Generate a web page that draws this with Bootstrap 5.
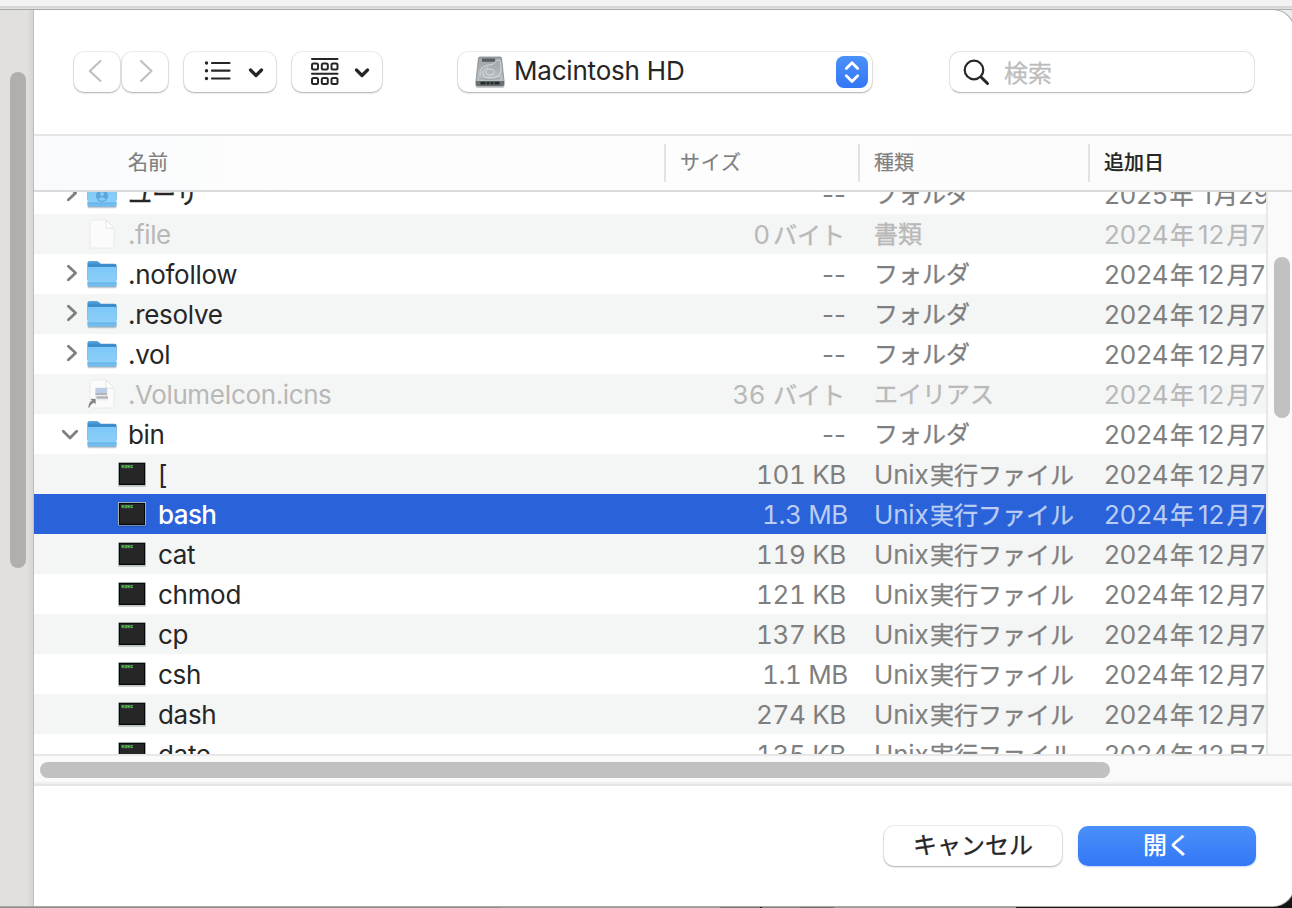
<!DOCTYPE html>
<html lang="ja">
<head>
<meta charset="utf-8">
<meta name="viewport" content="width=device-width, initial-scale=1">
<title>Macintosh HD</title>
<link href="https://cdn.jsdelivr.net/npm/bootstrap@5.3.0/dist/css/bootstrap.min.css" rel="stylesheet">
<style>
html,body{height:100%;overflow:hidden}
body{font-family:Inter,"Noto Sans CJK JP",sans-serif;font-size:26px;line-height:42px;color:#262626;background:linear-gradient(90deg,#8e8e8e 0 500px,#999b99 500px 720px,#777 720px 760px,#1c1c1c 760px 762px,#858585 762px 800px,#6e6e6e 800px 834px,#999b99 834px 1016px,#151515 1016px)}
.desk-strip{height:10px;background:linear-gradient(#f2f2f2 0 6px,#d6d8d6 6px 8px,#dfe1df 8px 9px,#adb0ad 9px)}
.corner-bg{height:896px;background:linear-gradient(#eceeed 0 60px,#151515 60px)}
.sheet{width:1294px;height:896px;background:#fff;border-radius:0 21px 21px 0;overflow:hidden;box-shadow:0 0 0 1px #a9aba9}
.side{width:34px;background:linear-gradient(90deg,#e1e0de 0 27px,#dcdad8 30px,#d6d3d2 33px,#bfbdbd 33px);padding:62px 0 0 10px}
.side-thumb{width:16px;height:496px;border-radius:8px;background:#b0afad}
.pane{width:1258px}
.tools{height:124px;padding:42px 0 0 40px}
.ctl{height:40px;border-radius:10px;background:#fff;border:0;box-shadow:0 0 0 1px rgba(0,0,0,.06),0 1px 2px rgba(0,0,0,.28);padding:0;color:#262626}
.ctl svg,.row-line svg{display:block;flex:none}
.nav-btn{width:46px}
.nav-btn+.nav-btn{margin-left:2px}
.list-btn{width:92px;margin-left:16px}
.group-btn{width:90px;margin-left:16px}
.volume{width:414px;margin-left:76px}
.mac{padding:0 0 2px 8px;line-height:38px;letter-spacing:-.2px}
.search{width:306px;height:42px;margin:-1px 0 0 77px;border-radius:11px;border:1px solid #e3e3e3;border-bottom-color:#bdbdbd;box-shadow:0 1px 0 rgba(0,0,0,.05)}
.search svg{margin-left:12px}
.search span{margin-left:14px;padding-top:3px;font-size:24px;color:#bdbdbd;-webkit-text-stroke:.3px}
.heads{height:58px;border-top:2px solid #e5e5e5;border-bottom:2px solid #d9dadb;background:linear-gradient(90deg,#f8fafc,#fdfdfd 20%,#fdfdfd 60%,#fafafa);font-size:20px;line-height:52px;color:#7f7f7f;-webkit-text-stroke:.2px}
.heads .sep{width:2px;height:38px;background:#e2e2e2}
.h-name{width:630px;padding-left:94px}
.h-size{width:192px;padding-left:14px;letter-spacing:.8px}
.h-kind{width:228px;padding-left:14px}
.h-date{padding-left:14px;color:#262626;font-weight:500}
.list-zone{height:562px}
.rows{width:1232px;height:562px;overflow:hidden}
.rows-in{margin-top:-18px}
.row-line{height:40px;white-space:nowrap;color:#262626}
.row-line:nth-child(even){background:#f4f5f5}
.c-name{width:630px;padding-left:53px}
.c-name.sub{padding-left:83px}
.nm{margin-left:11px;padding-top:2px;letter-spacing:-.3px}
.jp.nm{letter-spacing:0;padding-top:1px}
.c-size{width:182px;text-align:right;color:#7f7f7f}
.num{font-variant-numeric:tabular-nums;letter-spacing:-.35px}
.mb{margin-right:-2px}
.c-kind{width:230px;margin-left:28px;color:#7f7f7f}
.c-date{width:162px;height:40px;overflow:hidden;color:#7f7f7f}
.jp,.y,.m{font-size:24px;-webkit-text-stroke:.35px}
.y{margin:0 4px 0 1.5px}
.m{margin-left:2px}
.byte{margin:0 1px 0 3px}
.dim .num+.byte{margin-left:1px}
.u{font-size:26px;margin:0 1.5px 0 0;letter-spacing:-.2px;-webkit-text-stroke:0}
.tw{width:25px;margin-left:-28px;margin-right:3px}
.dim .nm,.dim .c-size,.dim .c-kind,.dim .c-date{color:#b8b8b8}
.dim .nm{letter-spacing:-.4px}
.rows .sel{background:#2962d9;color:#fff}
.sel .c-size,.sel .c-kind,.sel .c-date{color:#bccdf3}
.sel .nm{font-weight:500;letter-spacing:-.6px}
.vtrack{width:26px;border-left:2px solid #e8e8e8;background:#fafafa;padding:65px 0 0 6px}
.vthumb{width:16px;height:161px;border-radius:8px;background:#c1c1c1}
.htrack{height:32px;border-bottom:2px solid #e5e5e5;background:linear-gradient(#e8e8e8 0 2px,#fafafa 2px 28px,#efefef 28px);padding:8px 0 0 6px}
.hthumb{width:1070px;height:16px;border-radius:8px;background:#c1c1c1}
.foot{padding:40px 36px 0 0;gap:16px}
.foot .ctl{width:178px;font-size:24px;line-height:38px;-webkit-text-stroke:.35px}
.foot .go{background:linear-gradient(#4a90f9,#3477f6);color:#fff;box-shadow:0 1px 2px rgba(40,110,240,.3);font-weight:500;-webkit-text-stroke:0}
</style>
</head>
<body>
<svg width="0" height="0" class="position-absolute" aria-hidden="true">
<defs>
<linearGradient id="fb" x1="0" y1="0" x2="0" y2="1"><stop offset="0" stop-color="#5ba9dc"/><stop offset=".3" stop-color="#2f80c4"/></linearGradient>
<linearGradient id="ff" x1="0" y1="0" x2="0" y2="1"><stop offset="0" stop-color="#7cc8f8"/><stop offset=".7" stop-color="#8bcef9"/><stop offset="1" stop-color="#68b5ea"/></linearGradient>
<linearGradient id="hd" x1="0" y1="0" x2="0" y2="1"><stop offset="0" stop-color="#9ba1a5"/><stop offset="1" stop-color="#c3c9cc"/></linearGradient>
<linearGradient id="bl" x1="0" y1="0" x2="0" y2="1"><stop offset="0" stop-color="#4a90f9"/><stop offset="1" stop-color="#3477f6"/></linearGradient>
</defs>
<symbol id="folder" viewBox="0.6 -0.8 29 30" preserveAspectRatio="none">
<rect x="1" y="24" width="28.4" height="4.400" rx="2" fill="#000" opacity=".2"/>
<path d="M1 3.200Q1 1.200 3 1.200H9.500Q11 1.200 12 2.200L13.300 3.400Q14 4 15.200 4H27.400Q29.200 4 29.200 6V20H1Z" fill="url(#fb)"/>
<path d="M1 8.500Q1 7 2.500 7H27.700Q29.200 7 29.200 8.500V25Q29.200 27 27.200 27H3Q1 27 1 25Z" fill="url(#ff)"/>
<path d="M1 23.500H29.200" stroke="#5da9de" stroke-width=".8"/>
</symbol>
<symbol id="page" viewBox="0 0 30 30">
<path d="M3 2.500Q3 1 4.500 1H19L27 9V27.500Q27 29 25.500 29H4.500Q3 29 3 27.500Z" fill="#fbfbfb" stroke="#e6e7e7" stroke-width=".8"/>
<path d="M19 1V8Q19 9 20 9H27Z" fill="#fff" stroke="#dcdddd" stroke-width=".8"/>
</symbol>
<symbol id="term" viewBox="0 -1 30 26">
<rect x="1" y="2" width="28" height="22.800" rx="1" fill="#000" opacity=".25"/>
<rect x="1" y="0" width="28" height="23.500" rx=".8" fill="#c7d9e0"/>
<rect x="1.800" y=".8" width="26.400" height="22.200" fill="#060606"/>
<rect x="3" y="1.800" width="24" height="20" fill="#262626"/>
<text x="4.600" y="6.400" font-family="Liberation Mono" font-weight="bold" font-size="4.800" fill="#5fc05f" stroke="#5fc05f" stroke-width=".25">exec</text>
</symbol>
<symbol id="right" viewBox="0 0 25 40"><path d="M9.400 12.300 16.600 19 9.400 25.700" fill="none" stroke="#7f7f7f" stroke-width="2.800" stroke-linecap="round" stroke-linejoin="round"/></symbol>
<symbol id="down" viewBox="0 0 25 40"><path d="M4.300 17.300 11 24 17.700 17.300" fill="none" stroke="#7f7f7f" stroke-width="2.800" stroke-linecap="round" stroke-linejoin="round"/></symbol>
<symbol id="caret" viewBox="0 0 16 10"><path d="M2.500 2 8 7.500 13.500 2" fill="none" stroke="#262626" stroke-width="3.200" stroke-linecap="round" stroke-linejoin="round"/></symbol>
</svg>

<div class="desk-strip"></div>
<div class="corner-bg">
<div class="sheet d-flex">
  <aside class="side flex-shrink-0"><div class="side-thumb"></div></aside>
  <main class="pane d-flex flex-column flex-shrink-0">
    <div class="tools d-flex align-items-start flex-shrink-0">
      <button class="ctl nav-btn d-flex" aria-label="戻る"><svg width="46" height="40" fill="none" stroke="#bfbfbf" stroke-width="2.200" stroke-linecap="round" stroke-linejoin="round"><path d="M26.500 9 15.800 19 26.500 29"/></svg></button>
      <button class="ctl nav-btn d-flex" aria-label="進む"><svg width="46" height="40" fill="none" stroke="#bfbfbf" stroke-width="2.200" stroke-linecap="round" stroke-linejoin="round"><path d="M19 9 29.500 19 19 29"/></svg></button>
      <button class="ctl list-btn d-flex" aria-label="リスト"><svg width="92" height="40"><g fill="#262626"><circle cx="22.500" cy="11" r="1.700"/><circle cx="22.500" cy="18.700" r="1.700"/><circle cx="22.500" cy="26.500" r="1.700"/></g><path d="M28 11H45.500M28 18.700H45.500M28 26.500H45.500" stroke="#262626" stroke-width="2.200" stroke-linecap="round"/><use href="#caret" x="64" y="16" width="16" height="10"/></svg></button>
      <button class="ctl group-btn d-flex" aria-label="グループ"><svg width="90" height="40" fill="none" stroke="#262626" stroke-width="2"><path d="M20 7H45.500M20 21.800H45.500" stroke-linecap="round"/><rect x="20" y="11.500" width="6" height="6" rx="1.500"/><rect x="29.800" y="11.500" width="6" height="6" rx="1.500"/><rect x="39.500" y="11.500" width="6" height="6" rx="1.500"/><rect x="20" y="26" width="6" height="6" rx="1.500"/><rect x="29.800" y="26" width="6" height="6" rx="1.500"/><rect x="39.500" y="26" width="6" height="6" rx="1.500"/><use href="#caret" x="62" y="16" width="16" height="10"/></svg></button>
      <button class="ctl volume d-flex align-items-center text-start">
        <svg class="ms-3" width="32" height="34" viewBox="0 -.5 32 34"><rect x="1.500" y="24" width="29" height="8.500" rx="2" fill="#000" opacity=".2"/><path d="M4.500 2.500Q4.600 1.500 5.700 1.500H26.300Q27.400 1.500 27.500 2.500L30 25V29Q30 30.500 28.500 30.500H3.500Q2 30.500 2 29V25Z" fill="url(#hd)" stroke="#81878b" stroke-width=".8"/><path d="M2 25.500H30V29Q30 30.500 28.500 30.500H3.500Q2 30.500 2 29Z" fill="#6b7073"/><path d="M6.500 26.300H25.500V29H6.500Z" fill="#25292b"/><path d="M12 26.500V29M16 26.500V29M20 26.500V29" stroke="#6e7678"/><rect x="8" y="3" width="13" height="3.300" rx=".5" fill="#565c60"/><ellipse cx="16" cy="16.500" rx="4.200" ry="3" fill="none" stroke="#dde2e4" stroke-width=".9"/><path d="M6 20Q5 10.500 15 9.500Q20 9 21.500 6.500Q22.500 4 25 4.500Q26.500 5 27 10Q27.500 17 25 20Q21 23 15 22.500Q9 22 9 17.500Q9.300 13.500 14 12" fill="none" stroke="#dfe4e6" stroke-width=".8"/><path d="M5.500 23Q15 25 26 23" fill="none" stroke="#8d9396" stroke-width=".7"/></svg>
        <span class="flex-grow-1 mac">Macintosh HD</span>
        <svg class="me-1" width="32" height="32"><rect width="32" height="32" rx="8" fill="url(#bl)"/><path d="M10.300 12.500 16 6.800 21.700 12.500M10.300 19.800 16 25.500 21.700 19.800" fill="none" stroke="#fff" stroke-width="2.800" stroke-linecap="round" stroke-linejoin="round"/></svg>
      </button>
      <div class="search d-flex align-items-center"><svg width="28" height="28" fill="none" stroke="#262626"><circle cx="12" cy="12" r="9.300" stroke-width="2.200"/><path d="M19 19 25.500 25.500" stroke-width="3" stroke-linecap="round"/></svg><span>検索</span></div>
    </div>
    <div class="heads d-flex align-items-center flex-shrink-0">
      <div class="h-name">名前</div><div class="sep"></div>
      <div class="h-size">サイズ</div><div class="sep"></div>
      <div class="h-kind">種類</div><div class="sep"></div>
      <div class="h-date">追加日</div>
    </div>
    <div class="list-zone d-flex flex-shrink-0">
      <div class="rows"><div class="rows-in">
        <div class="row-line d-flex"><div class="c-name d-flex align-items-center"><svg class="tw" width="25" height="40"><use href="#right"/></svg><svg width="30" height="30"><use href="#folder"/><circle cx="15" cy="17" r="6" fill="#5ba6dc"/><circle cx="15" cy="15" r="2" fill="#86c9f4"/><path d="M11 20.500Q15 15.500 19 20.500Q15 23 11 20.500" fill="#86c9f4"/></svg><span class="jp nm">ユーザ</span></div><div class="c-size">--</div><div class="c-kind jp">フォルダ</div><div class="c-date">2025<span class="y">年</span><span class="ms-1">1</span><span class="m">月</span>29</div></div>
        <div class="row-line d-flex dim"><div class="c-name d-flex align-items-center"><svg width="30" height="30"><use href="#page"/></svg><span class="nm">.file</span></div><div class="c-size">0<span class="jp byte">バイト</span></div><div class="c-kind jp">書類</div><div class="c-date">2024<span class="y">年</span>12<span class="m">月</span>7</div></div>
        <div class="row-line d-flex"><div class="c-name d-flex align-items-center"><svg class="tw" width="25" height="40"><use href="#right"/></svg><svg width="30" height="30"><use href="#folder"/></svg><span class="nm">.nofollow</span></div><div class="c-size">--</div><div class="c-kind jp">フォルダ</div><div class="c-date">2024<span class="y">年</span>12<span class="m">月</span>7</div></div>
        <div class="row-line d-flex"><div class="c-name d-flex align-items-center"><svg class="tw" width="25" height="40"><use href="#right"/></svg><svg width="30" height="30"><use href="#folder"/></svg><span class="nm">.resolve</span></div><div class="c-size">--</div><div class="c-kind jp">フォルダ</div><div class="c-date">2024<span class="y">年</span>12<span class="m">月</span>7</div></div>
        <div class="row-line d-flex"><div class="c-name d-flex align-items-center"><svg class="tw" width="25" height="40"><use href="#right"/></svg><svg width="30" height="30"><use href="#folder"/></svg><span class="nm">.vol</span></div><div class="c-size">--</div><div class="c-kind jp">フォルダ</div><div class="c-date">2024<span class="y">年</span>12<span class="m">月</span>7</div></div>
        <div class="row-line d-flex dim"><div class="c-name d-flex align-items-center"><svg width="30" height="30"><use href="#page"/><rect x="8" y="8.500" width="12.500" height="13" fill="#e9ecf0"/><rect x="8.500" y="9" width="11.500" height="5" fill="#bccbe6"/><path d="M8.500 15H20" stroke="#9a9c9f" stroke-width="1.400"/><path d="M9.500 18.500H21" stroke="#b0b2b4" stroke-width="2.400"/><path d="M.8 29Q1.500 22.500 4.500 21.500L2.500 19.500H9V26L7 24Q4 25 2.500 29Z" fill="#858585" stroke="#fff" stroke-width=".7"/></svg><span class="nm">.VolumeIcon.icns</span></div><div class="c-size"><span class="num">36 </span><span class="jp byte">バイト</span></div><div class="c-kind jp">エイリアス</div><div class="c-date">2024<span class="y">年</span>12<span class="m">月</span>7</div></div>
        <div class="row-line d-flex"><div class="c-name d-flex align-items-center"><svg class="tw" width="25" height="40"><use href="#down"/></svg><svg width="30" height="30"><use href="#folder"/></svg><span class="nm">bin</span></div><div class="c-size">--</div><div class="c-kind jp">フォルダ</div><div class="c-date">2024<span class="y">年</span>12<span class="m">月</span>7</div></div>
        <div class="row-line d-flex"><div class="c-name sub d-flex align-items-center"><svg width="30" height="26"><use href="#term"/></svg><span class="nm">[</span></div><div class="c-size"><span class="num">101 KB</span></div><div class="c-kind jp"><span class="u">Unix</span>実行ファイル</div><div class="c-date">2024<span class="y">年</span>12<span class="m">月</span>7</div></div>
        <div class="row-line d-flex sel"><div class="c-name sub d-flex align-items-center"><svg width="30" height="26"><use href="#term"/></svg><span class="nm">bash</span></div><div class="c-size"><span class="num mb">1.3 MB</span></div><div class="c-kind jp"><span class="u">Unix</span>実行ファイル</div><div class="c-date">2024<span class="y">年</span>12<span class="m">月</span>7</div></div>
        <div class="row-line d-flex"><div class="c-name sub d-flex align-items-center"><svg width="30" height="26"><use href="#term"/></svg><span class="nm">cat</span></div><div class="c-size"><span class="num">119 KB</span></div><div class="c-kind jp"><span class="u">Unix</span>実行ファイル</div><div class="c-date">2024<span class="y">年</span>12<span class="m">月</span>7</div></div>
        <div class="row-line d-flex"><div class="c-name sub d-flex align-items-center"><svg width="30" height="26"><use href="#term"/></svg><span class="nm">chmod</span></div><div class="c-size"><span class="num">121 KB</span></div><div class="c-kind jp"><span class="u">Unix</span>実行ファイル</div><div class="c-date">2024<span class="y">年</span>12<span class="m">月</span>7</div></div>
        <div class="row-line d-flex"><div class="c-name sub d-flex align-items-center"><svg width="30" height="26"><use href="#term"/></svg><span class="nm">cp</span></div><div class="c-size"><span class="num">137 KB</span></div><div class="c-kind jp"><span class="u">Unix</span>実行ファイル</div><div class="c-date">2024<span class="y">年</span>12<span class="m">月</span>7</div></div>
        <div class="row-line d-flex"><div class="c-name sub d-flex align-items-center"><svg width="30" height="26"><use href="#term"/></svg><span class="nm">csh</span></div><div class="c-size"><span class="num mb">1.1 MB</span></div><div class="c-kind jp"><span class="u">Unix</span>実行ファイル</div><div class="c-date">2024<span class="y">年</span>12<span class="m">月</span>7</div></div>
        <div class="row-line d-flex"><div class="c-name sub d-flex align-items-center"><svg width="30" height="26"><use href="#term"/></svg><span class="nm">dash</span></div><div class="c-size"><span class="num">274 KB</span></div><div class="c-kind jp"><span class="u">Unix</span>実行ファイル</div><div class="c-date">2024<span class="y">年</span>12<span class="m">月</span>7</div></div>
        <div class="row-line d-flex"><div class="c-name sub d-flex align-items-center"><svg width="30" height="26"><use href="#term"/></svg><span class="nm">date</span></div><div class="c-size"><span class="num">135 KB</span></div><div class="c-kind jp"><span class="u">Unix</span>実行ファイル</div><div class="c-date">2024<span class="y">年</span>12<span class="m">月</span>7</div></div>
      </div></div>
      <div class="vtrack"><div class="vthumb"></div></div>
    </div>
    <div class="htrack flex-shrink-0"><div class="hthumb"></div></div>
    <div class="foot d-flex justify-content-end">
      <button class="ctl">キャンセル</button><button class="ctl go">開く</button>
    </div>
  </main>
</div>
</div>
</body>
</html>
